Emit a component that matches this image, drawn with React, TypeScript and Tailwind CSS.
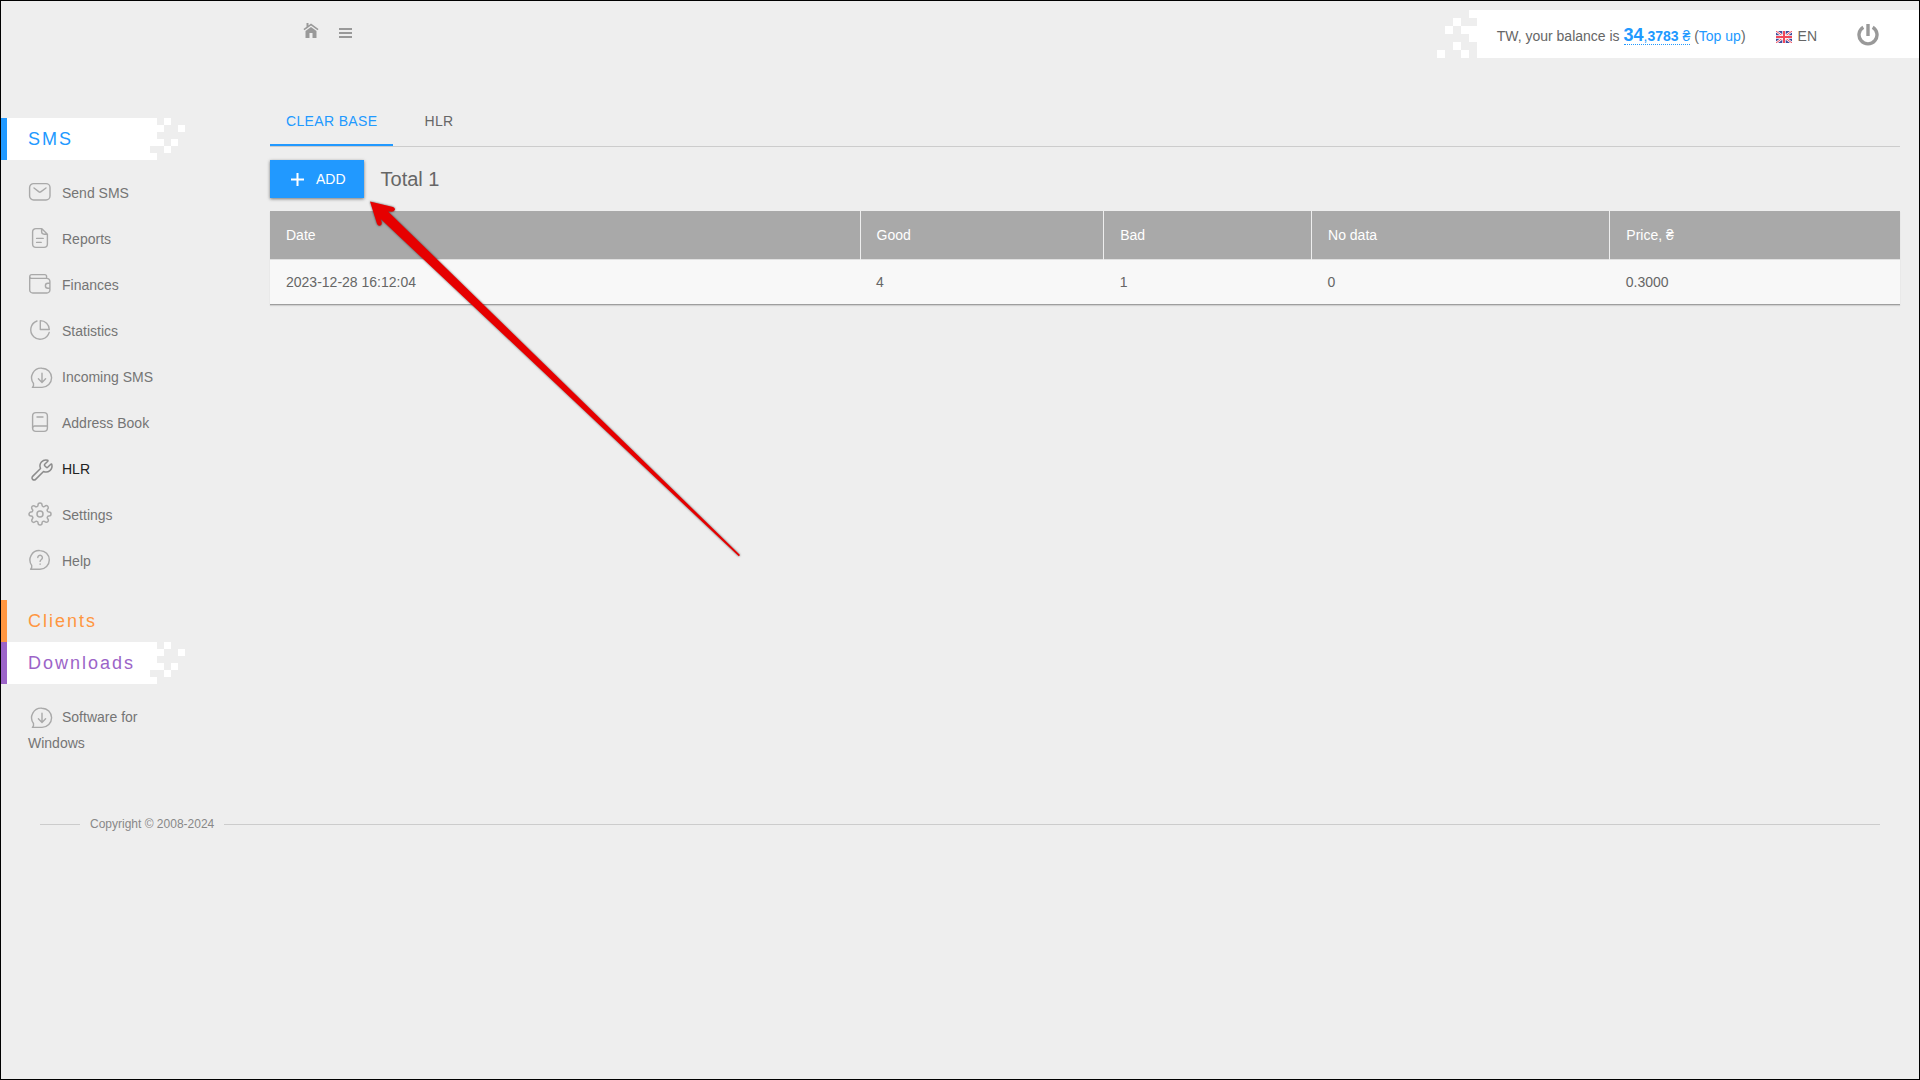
import React from "react";
import { Wrench } from "lucide-react";
import { FiSettings } from "react-icons/fi";

const iconProps = {
  viewBox: "0 0 24 24",
  fill: "none",
  stroke: "currentColor",
  strokeWidth: 1.4,
  strokeLinecap: "round" as const,
  strokeLinejoin: "round" as const,
  "aria-hidden": true,
  className: "-mt-1 mr-2.5 inline size-6 overflow-visible align-middle",
};

const MailIcon = () => (
  <svg {...iconProps}>
    <rect x="1.6" y="3.6" width="20.4" height="16.4" rx="4" />
    <path d="M6 8l5 3.9a1.4 1.4 0 0 0 1.7 0L18 8" />
  </svg>
);

const ReportIcon = () => (
  <svg {...iconProps}>
    <path d="M13.6 2.6H8a3.4 3.4 0 0 0-3.4 3.4v12A3.4 3.4 0 0 0 8 21.4h8a3.4 3.4 0 0 0 3.4-3.4V8.2zM13.6 2.6v3a2.6 2.6 0 0 0 2.6 2.6h3.2M8.6 12.4h6.6M8.6 16.4h4.6" />
  </svg>
);

const WalletIcon = () => (
  <svg {...iconProps}>
    <path d="M1.7 4.5V18a3 3 0 0 0 3 3h14.2a3 3 0 0 0 3-3V9.4a3 3 0 0 0-3-3H3.7a1.9 1.9 0 0 1 0-3.8h13a1.9 1.9 0 0 1 1.9 1.9v1.9M21.9 11.2h-2a2.5 2.5 0 0 0 0 5h2" />
  </svg>
);

const PieIcon = () => (
  <svg {...iconProps}>
    <path d="M9 3A9.4 9.4 0 1 0 21.2 14.4M12.3 2.6v8.9h9A9 9 0 0 0 12.3 2.6z" />
  </svg>
);

const IncomingIcon = () => (
  <svg {...iconProps}>
    <path d="M14 4.2a9.6 9.6 0 0 1 0 19.2H4.4c1-1 1.5-2.2 1.1-3.9A9.6 9.6 0 0 1 14 4.2zM14 9.2v9M10.4 14.800L14 18.400l3.600-3.600" />
  </svg>
);

const BookIcon = () => (
  <svg {...iconProps}>
    <rect x="4.6" y="2.6" width="14.8" height="18.8" rx="3.4" />
    <path d="M4.6 18a2 2 0 0 1 2-2h12.800M9 7h6" />
  </svg>
);

const HelpIcon = () => (
  <svg {...iconProps}>
    <path d="M12 2.6a9.3 9.3 0 0 1 0 18.6H2.6c1-1 1.5-2.200 1.100-3.900A9.300 9.300 0 0 1 12 2.600zM9.800 9.600a2.300 2.300 0 1 1 3.600 1.900c-.9.600-1.300 1-1.300 1.900M12.100 16v.3" />
  </svg>
);

const WrenchIcon = () => (
  <Wrench className="-my-0.5 mr-2 ml-0.5 inline size-6 align-middle text-[#8c8c8c]" strokeWidth={1.5} />
);

const GearIcon = () => <FiSettings className="-mt-1 mr-2.5 inline size-6 align-middle" strokeWidth={1.5} />;

const smsItems = [
  { label: "Send SMS", Icon: MailIcon },
  { label: "Reports", Icon: ReportIcon },
  { label: "Finances", Icon: WalletIcon },
  { label: "Statistics", Icon: PieIcon },
  { label: "Incoming SMS", Icon: IncomingIcon },
  { label: "Address Book", Icon: BookIcon },
  { label: "HLR", Icon: WrenchIcon, active: true },
  { label: "Settings", Icon: GearIcon },
  { label: "Help", Icon: HelpIcon },
];

const downloadItems = [{ label: "Software for Windows", Icon: IncomingIcon }];

type Item = { label: string; Icon: () => React.JSX.Element; active?: boolean };

const SidePixels = () => (
  <svg width="35" height="42" viewBox="0 0 5 6" fill="#fff" shapeRendering="crispEdges" aria-hidden="true">
    <path d="M0 0h1v1H0zM2 0h1v1H2zM0 1h2v1H0zM4 1h1v1H4zM0 2h1v1H0zM0 3h2v1H0zM3 3h1v1H3zM2 4h1v1H2zM0 5h1v1H0z" />
  </svg>
);

const Heading = ({ label, color, pixels }: { label: string; color: string; pixels?: boolean }) => (
  <h2 className="flex h-[42px] text-lg tracking-[2px]">
    <a href="#" className={`flex w-[149px] items-center border-l-6 pl-[21px] ${color}`}>
      {label}
    </a>
    {pixels && <SidePixels />}
  </h2>
);

const ItemList = ({ items }: { items: Item[] }) => (
  <ul className="w-[160px] py-2.5 pl-[27px]">
    {items.map(({ label, Icon, active }) => (
      <li key={label} className="py-2.5 leading-[26px]">
        <a href="#" className={active ? "text-[#222]" : "text-[#757575]"}>
          <span className="text-[#a9a9a9]">
            <Icon />
          </span>
          {label}
        </a>
      </li>
    ))}
  </ul>
);

const Header = () => (
  <header className="flex items-start justify-between pt-[9px]">
    <nav className="flex items-center gap-5 pt-3 pl-[302px] text-[#999]">
      <a href="#" aria-label="Home">
        <svg width="16" height="16" viewBox="0 0 16 16" fill="currentColor" aria-hidden="true">
          <path d="M3.5 1h2v2.6L8 1.600 15.500 7l-.9 1.200L8 3.500 1.400 8.200.5 7l3-2.200zM8 5l5.500 4v7H9.500v-5h-3v5h-4V9z" />
        </svg>
      </a>
      <button type="button" aria-label="Menu">
        <svg width="14" height="16" viewBox="0 0 14 16" fill="currentColor" aria-hidden="true">
          <path d="M0 6h13v2H0zM0 10h13v2H0zM0 14h13v2H0z" />
        </svg>
      </button>
    </nav>
    <div className="flex">
      <svg width="40" height="48" viewBox="0 0 5 6" fill="#fff" shapeRendering="crispEdges" aria-hidden="true">
        <path d="M4 0h1v1H4zM2 1h1v1H2zM1 2h1v1H1zM3 2h2v1H3zM4 3h1v1H4zM2 4h1v1H2zM0 5h1v1H0zM3 5h1v1H3z" />
      </svg>
      <div className="flex h-12 items-center bg-white pt-0.5 pr-10 pl-5">
        <div className="flex items-baseline gap-[30px] leading-5">
          <p>
            TW, your balance is{" "}
            <a href="#" className="border-b border-dotted border-[#2199ff] font-bold text-[#2199ff]">
              <span className="text-lg leading-5">34</span>
              <span className="font-normal">,</span>3783 <span className="font-normal">₴</span>
            </a>{" "}
            (
            <a href="#" className="text-[#2199ff]">
              Top up
            </a>
            )
          </p>
          <button type="button">
            <svg width="16" height="12" viewBox="0 0 16 12" className="mr-1.5 inline" aria-hidden="true">
              <path fill="#3f4a9a" d="M0 0h16v12H0z" />
              <path stroke="#fff" strokeWidth="2.4" d="M0 0l16 12M16 0L0 12" />
              <path stroke="#f0485a" strokeWidth="1" d="M0 0l16 12M16 0L0 12" />
              <path stroke="#fff" strokeWidth="3.4" d="M8 0v12M0 6h16" />
              <path stroke="#f0485a" strokeWidth="2" d="M8 0v12M0 6h16" />
            </svg>
            EN
          </button>
        </div>
        <button type="button" aria-label="Log out" className="ml-10">
          <svg width="22" height="22" viewBox="0 0 22 22" fill="none" stroke="#999" aria-hidden="true">
            <path strokeWidth="3.4" d="M6.300 3.200a9 9 0 1 0 9.400 0" />
            <path strokeWidth="3.4" d="M11 0v12" />
          </svg>
        </button>
      </div>
    </div>
  </header>
);

const ResultsTable = () => (
  <table className="mt-[13px] w-full border-collapse text-left shadow-[0_1px_1px_rgba(0,0,0,0.12)]">
    <thead className="bg-[#a9a9a9] text-white">
      <tr className="h-12 border-b border-[#e0e0e0]">
        <th className="w-[36.2%] px-4 font-normal">Date</th>
        <th className="w-[14.95%] border-l border-[#eee] px-4 font-normal">Good</th>
        <th className="w-[12.75%] border-l border-[#eee] px-4 font-normal">Bad</th>
        <th className="w-[18.3%] border-l border-[#eee] px-4 font-normal">No data</th>
        <th className="border-l border-[#eee] px-4 font-normal">Price, ₴</th>
      </tr>
    </thead>
    <tbody className="bg-[#f8f8f8]">
      <tr className="h-[45px] border-b border-[#9e9e9e]">
        <td className="px-4">2023-12-28 16:12:04</td>
        <td className="px-4">4</td>
        <td className="px-4">1</td>
        <td className="px-4">0</td>
        <td className="px-4">0.3000</td>
      </tr>
    </tbody>
  </table>
);

// red pointer lying over the page, aimed at the Add button
const Pointer = () => (
  <svg
    className="pointer-events-none absolute top-[199px] left-[367px] drop-shadow-[0_0_1px_rgba(0,0,0,0.6)]"
    width="376"
    height="360"
    viewBox="368 200 376 360"
    aria-hidden="true"
  >
    <path
      fill="#e60000"
      d="M370 201.500L393 207q2.500 1 1.800 3-.6 1.700-3 1.700l-3.800-.3L740 555l-1.200 1.200L380.700 219l1 3.500q.3 3-1.900 3.300-2 .2-2.800-2z"
    />
  </svg>
);

export default function App() {
  return (
    <div className="relative min-h-screen border border-black bg-[#eee] font-['Liberation_Sans',Arial,sans-serif] text-sm text-[#666]">
      <Header />
      <div className="flex pt-[60px]">
        <aside className="w-[269px] shrink-0">
          <Heading label="SMS" color="border-[#2199ff] bg-white text-[#2199ff]" pixels />
          <ItemList items={smsItems} />
          <div className="pt-1.5">
            <Heading label="Clients" color="border-[#ff9640] text-[#ff9640]" />
            <Heading label="Downloads" color="border-[#9c64c8] bg-white text-[#9c64c8]" pixels />
          </div>
          <ItemList items={downloadItems} />
        </aside>
        <main className="-mt-4 min-w-0 grow pr-[19px]">
          <nav className="flex gap-[15px] border-b border-[#ccc] tracking-wide">
            <a href="#" className="border-b-2 border-[#2199ff] px-4 pt-[9px] pb-[13px] text-[#2199ff]">
              CLEAR BASE
            </a>
            <a href="#" className="px-4 pt-[9px] pb-[13px]">
              HLR
            </a>
          </nav>
          <div className="flex items-center gap-[17px] pt-[13px]">
            <button
              type="button"
              className="flex h-[38px] items-center gap-3 bg-[#2199ff] pr-[18px] pl-[21px] text-white shadow-[0_1px_3px_rgba(0,0,0,0.5)]"
            >
              <svg width="13" height="13" viewBox="0 0 13 13" stroke="currentColor" strokeWidth="2" aria-hidden="true">
                <path d="M6.500 0v13M0 6.500h13" />
              </svg>
              ADD
            </button>
            <span className="text-xl">Total 1</span>
          </div>
          <ResultsTable />
        </main>
      </div>
      <footer className="flex items-center gap-2.5 px-[39px] pt-10 text-xs text-[#888]">
        <span className="h-px w-10 bg-[#ccc]" />
        Copyright © 2008-2024
        <span className="h-px grow bg-[#ccc]" />
      </footer>
      <Pointer />
    </div>
  );
}
